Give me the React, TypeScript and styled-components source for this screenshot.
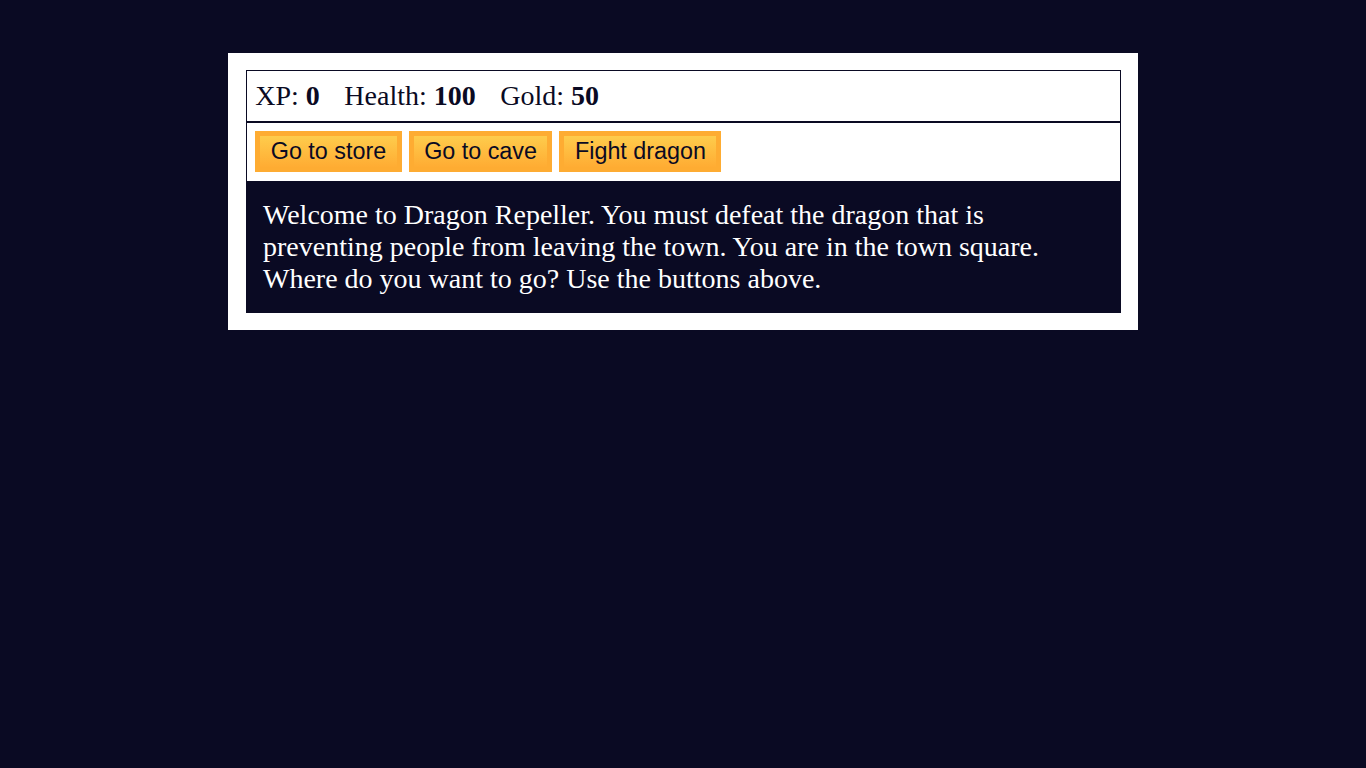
import React from "react";
import styled, { createGlobalStyle } from "styled-components";

const GlobalStyle = createGlobalStyle`
  html, body {
    margin: 0;
    padding: 0;
  }
  body {
    background-color: #0a0a23;
    font-family: "Liberation Serif", "Times New Roman", serif;
    font-size: 28px;
    min-height: 768px;
  }
`;

const Page = styled.div`
  padding: 14px;
  box-sizing: border-box;
  min-height: 768px;
  background-color: #0a0a23;
`;

const Game = styled.div`
  max-width: 875px;
  background-color: #ffffff;
  color: #ffffff;
  margin: 38.5px auto 0;
  padding: 17.5px;
`;

const Panel = styled.div`
  border: 1px solid #0a0a23;
  padding: 8.75px;
  color: #0a0a23;
`;

const Stat = styled.span`
  padding-right: 17.5px;
`;

const Button = styled.button`
  cursor: pointer;
  color: #0a0a23;
  background-color: #feac32;
  background-image: linear-gradient(#fecc4c, #ffac33);
  border: 5.25px solid #feac32;
  font-family: "Liberation Sans", Arial, sans-serif;
  font-size: 23.33px;
  padding: 1.75px 10.5px;
  margin: 0;
`;

const Text = styled.div`
  background-color: #0a0a23;
  color: #ffffff;
  padding: 17.5px;
`;

export default function App() {
  return (
    <>
      <GlobalStyle />
      <Page>
        <Game>
          <Panel>
            <Stat>
              XP: <strong>0</strong>
            </Stat>{" "}
            <Stat>
              Health: <strong>100</strong>
            </Stat>{" "}
            <Stat>
              Gold: <strong>50</strong>
            </Stat>
          </Panel>
          <Panel>
            <Button>Go to store</Button> <Button>Go to cave</Button>{" "}
            <Button>Fight dragon</Button>
          </Panel>
          <Text>
            Welcome to Dragon Repeller. You must defeat the dragon that is
            preventing people from leaving the town. You are in the town
            square. Where do you want to go? Use the buttons above.
          </Text>
        </Game>
      </Page>
    </>
  );
}
